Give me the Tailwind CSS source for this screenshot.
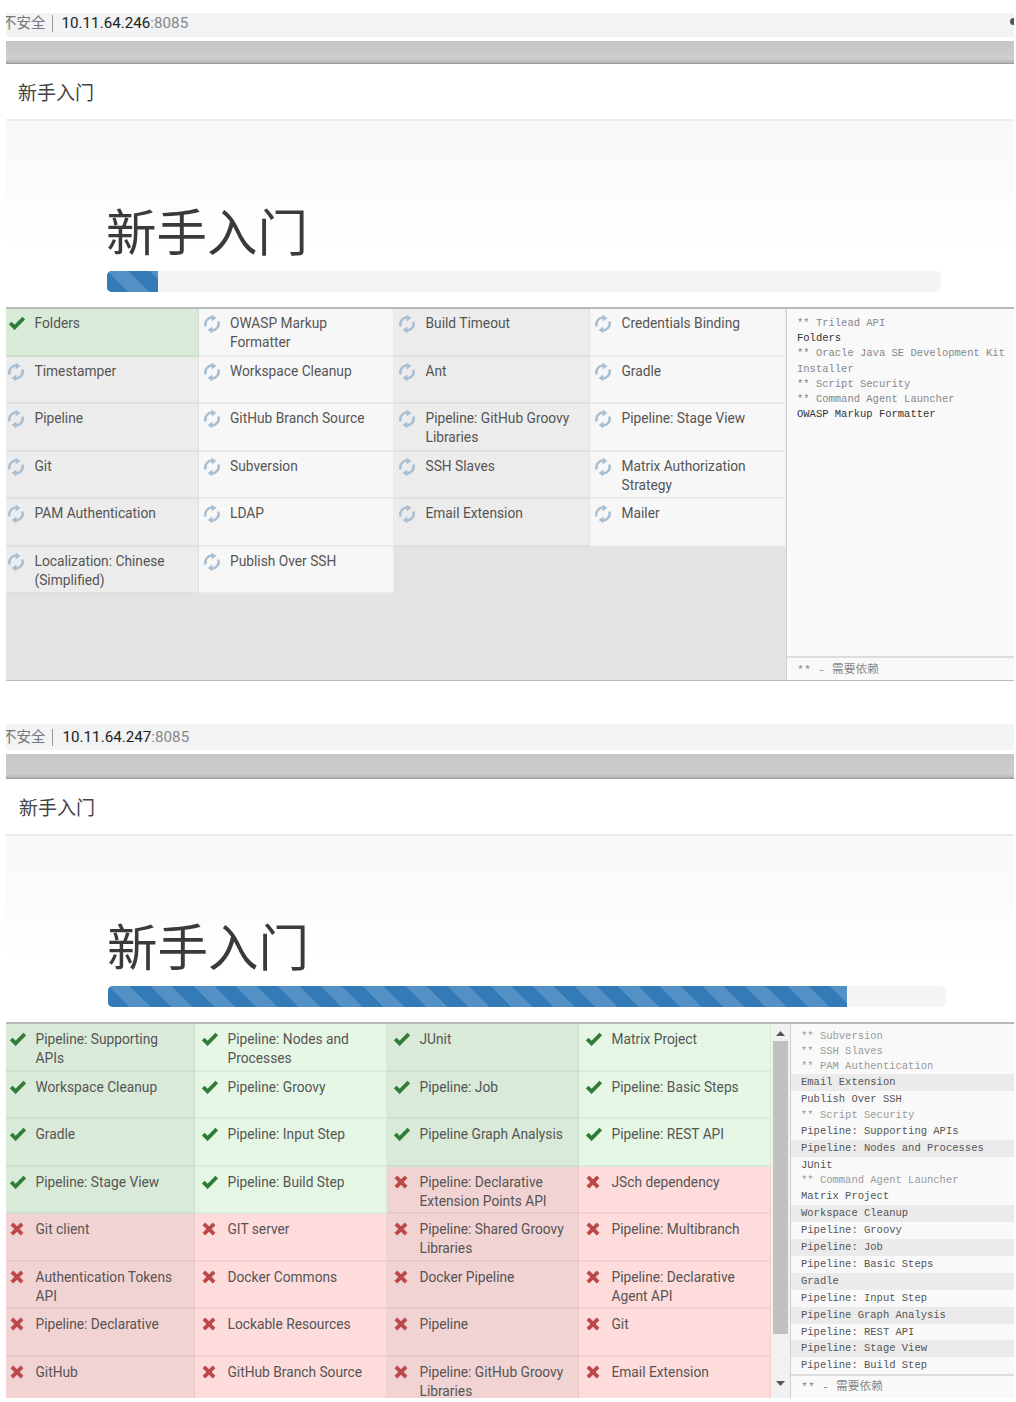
<!DOCTYPE html>
<html lang="zh-CN">
<head>
  <meta charset="UTF-8">
  <title>新手入门</title>
  <script src="https://cdn.jsdelivr.net/npm/@tailwindcss/browser@4"></script>
</head>
<body class="bg-white text-[#333] font-['Roboto','Noto_Sans_CJK_SC',sans-serif]">

<!-- icon sprites -->
<svg class="hidden">
  <symbol id="spin" viewBox="0 0 18 18">
    <path d="M2.6 11.5A6.8 6.8 0 0 1 9.6 2.6" fill="none" stroke="currentColor" stroke-width="2.4"/>
    <path d="M8.6 -0.4 13.4 3 8.6 6.4Z" fill="currentColor"/>
    <path d="M15.4 6.5A6.8 6.8 0 0 1 8.4 15.4" fill="none" stroke="currentColor" stroke-width="2.4"/>
    <path d="M9.4 18.4 4.6 15 9.4 11.6Z" fill="currentColor"/>
  </symbol>
  <symbol id="check" viewBox="0 0 16 14">
    <path d="M1.2 7 5.6 11.4 14.8 2" fill="none" stroke="currentColor" stroke-width="3.8"/>
  </symbol>
  <symbol id="cross" viewBox="0 0 14 14">
    <path d="M1.9 1.9 12.1 12.1M12.1 1.9 1.9 12.1" fill="none" stroke="currentColor" stroke-width="3.8"/>
  </symbol>
</svg>

<div class="h-[1402px] overflow-hidden pl-[6px] pr-[2px] pt-[13px]">

  <!-- first instance -->
  <section>
    <div class="relative flex h-[24px] items-center overflow-hidden bg-[#f1f3f4] pb-[4px] text-[14.5px]">
      <span class="ml-[-4px] mt-[2px] text-[#777]">不安全</span>
      <span class="ml-[6px] h-[17px] w-px bg-[#999]"></span>
      <span class="ml-[9px] mt-[1px] text-[15.2px] text-[#222]">10.11.64.246<span class="text-[#888]">:8085</span></span>
      <span class="absolute right-[-3px] top-[5px] h-[7px] w-[7px] rounded-full bg-[#555]"></span>
    </div>
    <div class="mt-[4px] h-[23px] border-b border-[#999] bg-[linear-gradient(#c6c6c6,#cdcdcd_80%,#b5b5b5)]"></div>
    <header class="flex h-[57px] items-center border-b-2 border-[#ececec] pl-[12px] pt-[6px] text-[19px] text-[#444]">新手入门</header>
    <div class="flex h-[186px] flex-col justify-end bg-[linear-gradient(#f8f8f8,#ffffff_70%)] pb-[15px] pl-[101px] pr-[73px]">
      <h1 class="mb-[5px] ml-[-1px] text-[50.5px] leading-[64px] font-normal text-[#3a3a3a]">新手入门</h1>
      <div class="h-[21px] overflow-hidden rounded-[5px] bg-[#f5f5f5]">
        <div class="h-full w-[51px] bg-[#337ab7] bg-[repeating-linear-gradient(45deg,#337ab7_0,#337ab7_15px,#5390c6_15px,#5390c6_30px)]"></div>
      </div>
    </div>
    <div class="flex h-[374px] border-t-2 border-b border-[#b9b9b9] shadow-[inset_0_1px_2px_rgba(0,0,0,0.15)]">
      <div id="tiles1" class="grid w-[780px] grid-cols-[192.5px_195.5px_196px_196px] auto-rows-[47.5px] content-start bg-[#e3e3e3]"></div>
      <div class="flex w-[228px] flex-col border-l border-[#d0d0d0] bg-[#f9f9f9]">
        <div id="log1" class="min-h-0 flex-1 pt-[7px] font-['Liberation_Mono','Noto_Sans_CJK_SC',monospace] text-[10.5px] leading-[15.2px]"></div>
        <div class="flex h-[24px] items-center border-t-2 border-[#ddd] pl-[10px] pt-[3px] text-[11.7px] text-[#888] font-['Liberation_Mono','Noto_Sans_CJK_SC',monospace]">** - 需要依赖</div>
      </div>
    </div>
  </section>

  <!-- second instance -->
  <section class="mt-[43px]">
    <div class="flex h-[26px] items-center overflow-hidden bg-[#f1f3f4] text-[14.5px]">
      <span class="ml-[-4px] mt-[2px] text-[#777]">不安全</span>
      <span class="ml-[6px] h-[17px] w-px bg-[#999]"></span>
      <span class="ml-[10px] text-[15.2px] text-[#222]">10.11.64.247<span class="text-[#888]">:8085</span></span>
    </div>
    <div class="mt-[4px] h-[25px] border-b border-[#999] bg-[linear-gradient(#c6c6c6,#cdcdcd_80%,#b5b5b5)]"></div>
    <header class="flex h-[57px] items-center border-b-2 border-[#ececec] pl-[13px] pt-[5px] text-[19px] text-[#444]">新手入门</header>
    <div class="flex h-[186px] flex-col justify-end bg-[linear-gradient(#f8f8f8,#ffffff_70%)] pb-[15px] pl-[102px] pr-[68px]">
      <h1 class="mb-[5px] ml-[-1px] text-[50.5px] leading-[64px] font-normal text-[#3a3a3a]">新手入门</h1>
      <div class="h-[21px] overflow-hidden rounded-[5px] bg-[#f5f5f5]">
        <div class="h-full w-[739px] bg-[#337ab7] bg-[repeating-linear-gradient(45deg,#337ab7_0,#337ab7_15px,#5390c6_15px,#5390c6_30px)]"></div>
      </div>
    </div>
    <div class="flex h-[376px] border-t-2 border-[#b9b9b9] shadow-[inset_0_1px_2px_rgba(0,0,0,0.15)]">
      <div id="tiles2" class="grid w-[765px] grid-cols-[189px_192px_192px_192px] auto-rows-[47.5px] content-start overflow-hidden bg-[#e3e3e3]"></div>
      <div class="flex w-[19px] flex-col items-center bg-[#f1f1f1] text-[#555]">
        <svg class="mt-[7px] h-[5px] w-[9px]" viewBox="0 0 9 5"><path d="M4.5 0 9 5H0Z" fill="currentColor"/></svg>
        <div class="mt-[5px] h-[293px] w-[15px] bg-[#c1c1c1]"></div>
        <svg class="mt-[47px] h-[5px] w-[9px]" viewBox="0 0 9 5"><path d="M0 0H9L4.5 5Z" fill="currentColor"/></svg>
      </div>
      <div class="flex w-[224px] flex-col border-l border-[#d0d0d0] bg-[#f9f9f9]">
        <div id="log2" class="min-h-0 flex-1 pt-[5px] font-['Liberation_Mono','Noto_Sans_CJK_SC',monospace] text-[10.5px]"></div>
        <div class="flex h-[24px] items-center border-t-2 border-[#ddd] pl-[10px] pt-[1px] text-[11.7px] text-[#888] font-['Liberation_Mono','Noto_Sans_CJK_SC',monospace]">** - 需要依赖</div>
      </div>
    </div>
  </section>
</div>

<script>
  const tiles1 = [
    ['ok', 'Folders'], ['spin', 'OWASP Markup Formatter'], ['spin', 'Build Timeout'], ['spin', 'Credentials Binding'],
    ['spin', 'Timestamper'], ['spin', 'Workspace Cleanup'], ['spin', 'Ant'], ['spin', 'Gradle'],
    ['spin', 'Pipeline'], ['spin', 'GitHub Branch Source'], ['spin', 'Pipeline: GitHub Groovy Libraries'], ['spin', 'Pipeline: Stage View'],
    ['spin', 'Git'], ['spin', 'Subversion'], ['spin', 'SSH Slaves'], ['spin', 'Matrix Authorization Strategy'],
    ['spin', 'PAM Authentication'], ['spin', 'LDAP'], ['spin', 'Email Extension'], ['spin', 'Mailer'],
    ['spin', 'Localization: Chinese (Simplified)'], ['spin', 'Publish Over SSH']
  ];
  const tiles2 = [
    ['ok', 'Pipeline: Supporting APIs'], ['ok', 'Pipeline: Nodes and Processes'], ['ok', 'JUnit'], ['ok', 'Matrix Project'],
    ['ok', 'Workspace Cleanup'], ['ok', 'Pipeline: Groovy'], ['ok', 'Pipeline: Job'], ['ok', 'Pipeline: Basic Steps'],
    ['ok', 'Gradle'], ['ok', 'Pipeline: Input Step'], ['ok', 'Pipeline Graph Analysis'], ['ok', 'Pipeline: REST API'],
    ['ok', 'Pipeline: Stage View'], ['ok', 'Pipeline: Build Step'], ['err', 'Pipeline: Declarative Extension Points API'], ['err', 'JSch dependency'],
    ['err', 'Git client'], ['err', 'GIT server'], ['err', 'Pipeline: Shared Groovy Libraries'], ['err', 'Pipeline: Multibranch'],
    ['err', 'Authentication Tokens API'], ['err', 'Docker Commons'], ['err', 'Docker Pipeline'], ['err', 'Pipeline: Declarative Agent API'],
    ['err', 'Pipeline: Declarative'], ['err', 'Lockable Resources'], ['err', 'Pipeline'], ['err', 'Git'],
    ['err', 'GitHub'], ['err', 'GitHub Branch Source'], ['err', 'Pipeline: GitHub Groovy Libraries'], ['err', 'Email Extension']
  ];

  const tileBg = {
    spin: ['bg-[#ececec]', 'bg-[#f7f7f7]'],
    ok: ['bg-[#d9ead9]', 'bg-[#e5f7e4]'],
    err: ['bg-[#f2d3d3]', 'bg-[#ffdcdc]']
  };
  const iconHtml = {
    spin: '<svg class="mt-[1px] h-[18px] w-[18px] shrink-0 text-[#a9bfd1]"><use href="#spin"/></svg>',
    ok: '<svg class="mt-[2px] ml-[2px] h-[14px] w-[16px] shrink-0 text-[#2f7d3a]"><use href="#check"/></svg>',
    err: '<svg class="mt-[2px] ml-[2px] mr-[2px] h-[14px] w-[14px] shrink-0 text-[#b94a48]"><use href="#cross"/></svg>'
  };

  function renderTiles(id, items, pad) {
    const box = document.getElementById(id);
    items.forEach(([state, label], i) => {
      const col = i % 4;
      const tile = document.createElement('div');
      tile.className = 'flex border-b-2 border-r border-black/5 text-[13.75px] leading-[19px] text-[#555] ' +
        tileBg[state][col % 2] + ' ' + pad[col === 0 ? 0 : 1];
      tile.innerHTML = iconHtml[state] + '<span class="ml-[9.5px] pr-[12px]">' + label + '</span>';
      box.appendChild(tile);
    });
  }
  renderTiles('tiles1', tiles1, ['pt-[5px] pl-[1px]', 'pt-[5px] pl-[4px]']);
  renderTiles('tiles2', tiles2, ['pt-[6px] pl-[2px]', 'pt-[6px] pl-[5px]']);

  // "*" lines are dependencies, "s" lines carry the striped background
  const log1 = [
    ['** Trilead API', '*'], ['Folders', ''], ['** Oracle Java SE Development Kit Installer', '*'],
    ['** Script Security', '*'], ['** Command Agent Launcher', '*'], ['OWASP Markup Formatter', '']
  ];
  const log2 = [
    ['** Subversion', '*'], ['** SSH Slaves', '*'], ['** PAM Authentication', '*'],
    ['Email Extension', 's'], ['Publish Over SSH', ''], ['** Script Security', '*'],
    ['Pipeline: Supporting APIs', ''], ['Pipeline: Nodes and Processes', 's'], ['JUnit', ''],
    ['** Command Agent Launcher', '*'], ['Matrix Project', ''], ['Workspace Cleanup', 's'],
    ['Pipeline: Groovy', ''], ['Pipeline: Job', 's'], ['Pipeline: Basic Steps', ''],
    ['Gradle', 's'], ['Pipeline: Input Step', ''], ['Pipeline Graph Analysis', 's'],
    ['Pipeline: REST API', ''], ['Pipeline: Stage View', 's'], ['Pipeline: Build Step', '']
  ];

  log1.forEach(([text, kind]) => {
    const line = document.createElement('div');
    line.className = 'pl-[10px] pr-[4px] ' + (kind === '*' ? 'text-[#888]' : 'text-[#333]');
    line.textContent = text;
    document.getElementById('log1').appendChild(line);
  });
  log2.forEach(([text, kind]) => {
    const line = document.createElement('div');
    line.className = 'px-[10px] ' + (kind === '*' ? 'h-[15px] leading-[15px] text-[#999]' : 'h-[16.9px] leading-[16.9px] text-[#555]') + (kind === 's' ? ' bg-[#ebebeb]' : '');
    line.textContent = text;
    document.getElementById('log2').appendChild(line);
  });
</script>
</body>
</html>
